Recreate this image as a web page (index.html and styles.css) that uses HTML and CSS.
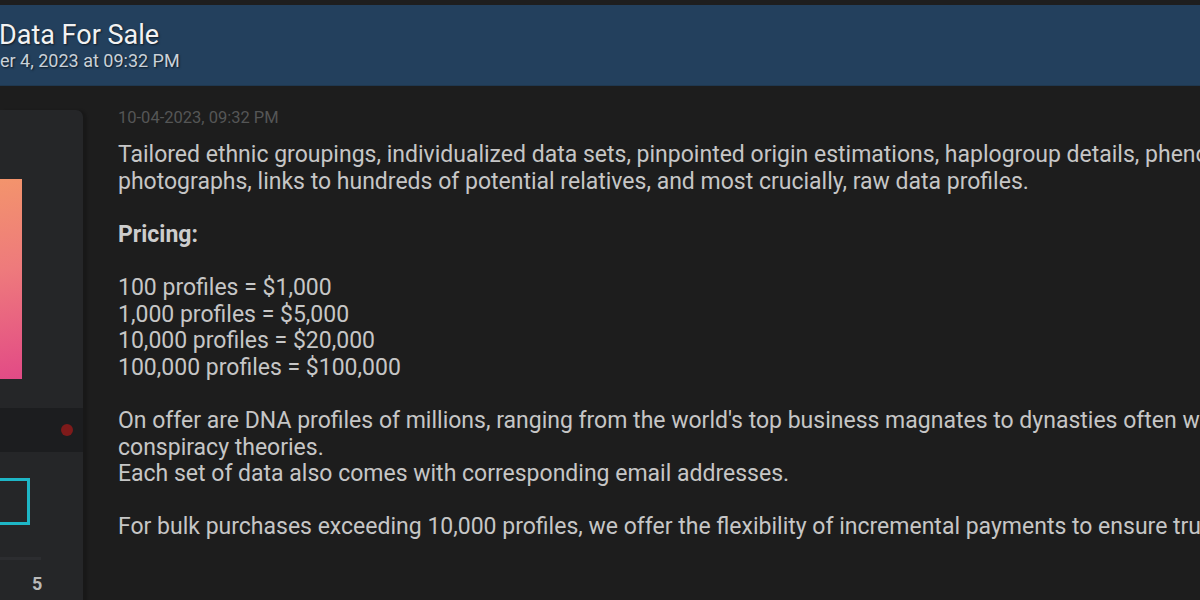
FILE: index.html
```html
<!DOCTYPE html>
<html>
<head>
<meta charset="utf-8">
<link rel="stylesheet" href="styles.css">
</head>
<body>
<div class="topbar"></div>
<header class="thread-head">
  <h1 class="thread-title">Data For Sale</h1>
  <div class="thread-date">er 4, 2023 at 09:32 PM</div>
</header>
<main class="post">
  <aside class="author">
    <div class="avatar-area"><div class="avatar"></div></div>
    <div class="status-band"><span class="status-dot"></span></div>
    <div class="author-info">
      <div class="badge-box"></div>
      <div class="rule"></div>
      <div class="count">5</div>
    </div>
  </aside>
  <section class="post-body">
    <div class="post-date">10-04-2023, 09:32 PM</div>
    <div class="post-text">
      <p>Tailored ethnic groupings, individualized data sets, pinpointed origin estimations, haplogroup details, phenotype<br>photographs, links to hundreds of potential relatives, and most crucially, raw data profiles.</p>
      <p><strong>Pricing:</strong></p>
      <p>100 profiles = $1,000<br>1,000 profiles = $5,000<br>10,000 profiles = $20,000<br>100,000 profiles = $100,000</p>
      <p>On offer are DNA profiles of millions, ranging from the world's top business magnates to dynasties often which<br>conspiracy theories.<br>Each set of data also comes with corresponding email addresses.</p>
      <p>For bulk purchases exceeding 10,000 profiles, we offer the flexibility of incremental payments to ensure trust.</p>
    </div>
  </section>
</main>
</body>
</html>
```
FILE: styles.css
```css
html, body {
  margin: 0;
  padding: 0;
  background: #1d1d1d;
  width: 1200px;
  height: 600px;
  overflow: hidden;
  font-family: Roboto, "Liberation Sans", sans-serif;
}
.topbar {
  height: 5px;
  background: #1e1e1e;
}
.thread-head {
  height: 81px;
  background: #23405d;
  box-sizing: border-box;
  padding-top: 15px;
  border-bottom: 1px solid #1f3850;
}
.thread-title {
  margin: 0 0 0 -1px;
  font-size: 27px;
  font-weight: 400;
  line-height: 30px;
  color: #f2f2f2;
  text-shadow: 1px 1px 2px rgba(0,0,0,0.6);
  white-space: nowrap;
}
.thread-date {
  margin-top: 1px;
  font-size: 18px;
  line-height: 20px;
  color: #c9d1d9;
  text-shadow: 1px 1px 2px rgba(0,0,0,0.6);
  white-space: nowrap;
}
.post {
  display: flex;
  padding-top: 24px;
}
.author {
  width: 83px;
  flex: none;
  height: 500px;
  background: #252628;
  border-top-right-radius: 7px;
  box-shadow: 4px 0 2px rgba(0,0,0,0.15);
}
.avatar-area {
  height: 298px;
  padding-top: 69px;
  box-sizing: border-box;
}
.avatar {
  width: 22px;
  height: 200px;
  background: linear-gradient(170deg, #f3946c 0%, #ee7a7c 45%, #e24a86 100%);
}
.status-band {
  height: 44px;
  background: #1c1d1f;
  display: flex;
  align-items: center;
  justify-content: flex-end;
  padding-right: 10px;
}
.status-dot {
  width: 12px;
  height: 12px;
  border-radius: 50%;
  background: #7e1a1a;
}
.author-info {
  padding-top: 26px;
}
.badge-box {
  width: 27px;
  height: 41px;
  border: 3px solid #1eb6c6;
  border-left: none;
}
.rule {
  margin-top: 32px;
  width: 41px;
  height: 3px;
  background: #2c2d30;
}
.count {
  margin-top: 13px;
  padding-left: 32px;
  font-size: 18px;
  font-weight: 700;
  color: #b9b9b9;
}
.post-body {
  padding-left: 35px;
  flex: 1;
  min-width: 0;
  overflow: hidden;
}
.post-date {
  font-size: 16.5px;
  line-height: 22px;
  color: #555656;
  margin-top: -3px;
  white-space: nowrap;
}
.post-text {
  margin-top: 13px;
  font-size: 23px;
  line-height: 26.6px;
  color: #c6c6c6;
  white-space: nowrap;
}
.post-text p {
  margin: 0 0 26.6px 0;
}
.post-text strong {
  font-weight: 700;
  color: #cdcdcd;
}
```
